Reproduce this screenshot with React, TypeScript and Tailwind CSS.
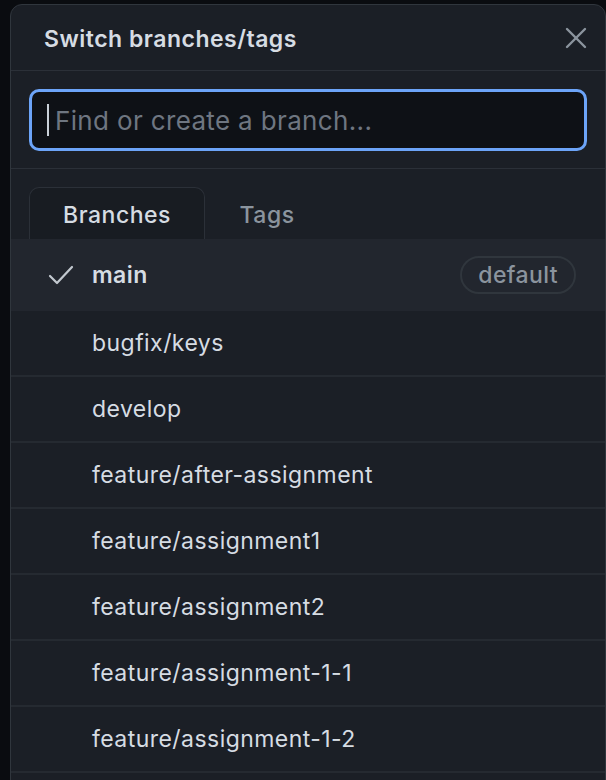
import React from 'react';

const branches = [
    'bugfix/keys',
    'develop',
    'feature/after-assignment',
    'feature/assignment1',
    'feature/assignment2',
    'feature/assignment-1-1',
    'feature/assignment-1-2',
];

export default function App() {
    return (
        <div
            className="w-[606px] h-[780px] overflow-hidden bg-[#0a0c10] pl-[10px] pt-[4px]"
            style={{ fontFamily: 'Inter, "Noto Sans", sans-serif' }}
        >
            <div className="h-[800px] rounded-t-[12px] border border-[#30363d] bg-[#1b1f26] flex flex-col">
                {/* Header */}
                <div className="h-[66px] shrink-0 flex items-center justify-between pl-[33px] pr-[18px] pt-[3px] border-b border-[#2b3038]">
                    <h1 className="text-[23px] font-semibold text-[#d6dce3] tracking-[0.5px]">Switch branches/tags</h1>
                    <svg width="22" height="22" viewBox="0 0 22 22" fill="none" stroke="#8b949e" strokeWidth="2.4" strokeLinecap="round" className="-mt-[2px]">
                        <line x1="2" y1="2" x2="20" y2="20" />
                        <line x1="20" y1="2" x2="2" y2="20" />
                    </svg>
                </div>

                {/* Filter */}
                <div className="shrink-0 px-[18px] pt-[18px] pb-[17px] border-b border-[#2b3038]">
                    <div className="h-[62px] rounded-[10px] border-[3px] border-[#6ca4f8] bg-[#0e1116] flex items-center pl-[15px]">
                        <span className="w-[2px] h-[32px] bg-[#c9d1d9] mr-[6px]" />
                        <span className="text-[26px] text-[#6e7681] tracking-[0.35px]">Find or create a branch...</span>
                    </div>
                </div>

                {/* Tabs */}
                <div className="shrink-0 pt-[18px] px-[18px] flex items-end">
                    <div className="w-[176px] h-[52px] pt-[4px] rounded-t-[10px] border border-b-0 border-[#2b3038] bg-[#181c22] flex items-center justify-center">
                        <span className="text-[23px] font-medium text-[#d6dce3] tracking-[0.5px]">Branches</span>
                    </div>
                    <div className="w-[124px] h-[52px] pt-[4px] flex items-center justify-center">
                        <span className="text-[23px] font-medium text-[#8b949e] tracking-[0.5px]">Tags</span>
                    </div>
                </div>

                {/* List */}
                <div className="flex flex-col">
                    <div className="h-[72px] bg-[#22262e] flex items-center pl-[37px] pr-[29px]">
                        <svg width="26" height="20" viewBox="0 0 26 20" fill="none" stroke="#c2c8cf" strokeWidth="2.2" strokeLinecap="round" strokeLinejoin="round" className="mr-[18px]">
                            <polyline points="2,11 9,18 24,2" />
                        </svg>
                        <span className="flex-1 text-[23px] font-semibold text-[#d6dce3] tracking-[0.4px]">main</span>
                        <span className="h-[38px] px-[16px] rounded-full border-2 border-[#30363d] flex items-center text-[23px] font-medium text-[#8b949e] tracking-[0.4px]">default</span>
                    </div>
                    {branches.map((b) => (
                        <div key={b} className="h-[66px] flex items-center pl-[81px] border-b-2 border-[#252a31]">
                            <span className="text-[23px] text-[#d6dce3] tracking-[0.45px]">{b}</span>
                        </div>
                    ))}
                </div>
            </div>
        </div>
    );
}
